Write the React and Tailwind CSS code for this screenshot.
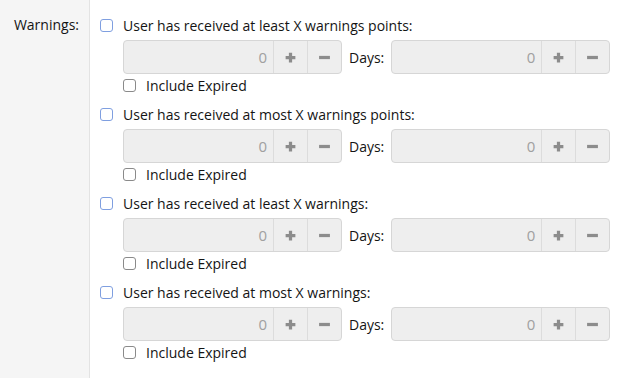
import React from 'react';

const rules = [
    'User has received at least X warnings points:',
    'User has received at most X warnings points:',
    'User has received at least X warnings:',
    'User has received at most X warnings:',
];

const Spinner = () => (
    <div className="flex h-[34px] w-[219px] rounded-[4px] border border-[#d6d6d6] bg-[#eeeeee]">
        <div className="flex flex-1 items-center justify-end pr-[6px] text-[15px] text-[#a0a0a0]">0</div>
        <div className="flex w-[34px] items-center justify-center border-l border-[#dcdcdc]">
            <svg className="w-[13px] h-[13px]" viewBox="0 0 12 12"><path d="M6 1.5v9M1.5 6h9" stroke="#8c8c8c" strokeWidth="3" /></svg>
        </div>
        <div className="flex w-[34px] items-center justify-center border-l border-[#dcdcdc]">
            <svg className="w-[13px] h-[13px]" viewBox="0 0 12 12"><path d="M1 6h10" stroke="#8c8c8c" strokeWidth="3" /></svg>
        </div>
    </div>
);

const Box = ({ blue }) => (
    <span className={`inline-block w-[13px] h-[13px] rounded-[3px] border bg-white shrink-0 ${blue ? 'border-[#7f9fe0]' : 'border-[#8a8a8a]'}`} />
);

const App = () => {
    return (
        <div className="flex w-[625px] h-[378px] overflow-hidden bg-white text-[#141414]" style={{ fontFamily: '"Open Sans", sans-serif' }}>
            {/* sidebar label */}
            <div className="w-[90px] shrink-0 bg-[#f5f5f5] border-r border-[#e3e3e3] pr-[10px] pt-[14px] text-right text-[14px]">
                Warnings:
            </div>

            <div className="flex flex-col pl-[10px] pt-[14px]">
                {rules.map((r, i) => (
                    <div key={i} className="h-[89px]">
                        <label className="flex items-center gap-[10px] h-[22px] text-[14px]">
                            <Box blue />
                            <span>{r}</span>
                        </label>
                        <div className="flex items-center pl-[23px] mt-[4px]">
                            <Spinner />
                            <span className="ml-[7px] mr-[7px] text-[14px]">Days:</span>
                            <Spinner />
                        </div>
                        <label className="flex items-center gap-[10px] pl-[23px] h-[22px] text-[14px]">
                            <Box />
                            <span>Include Expired</span>
                        </label>
                    </div>
                ))}
            </div>
        </div>
    );
};

export default App;
